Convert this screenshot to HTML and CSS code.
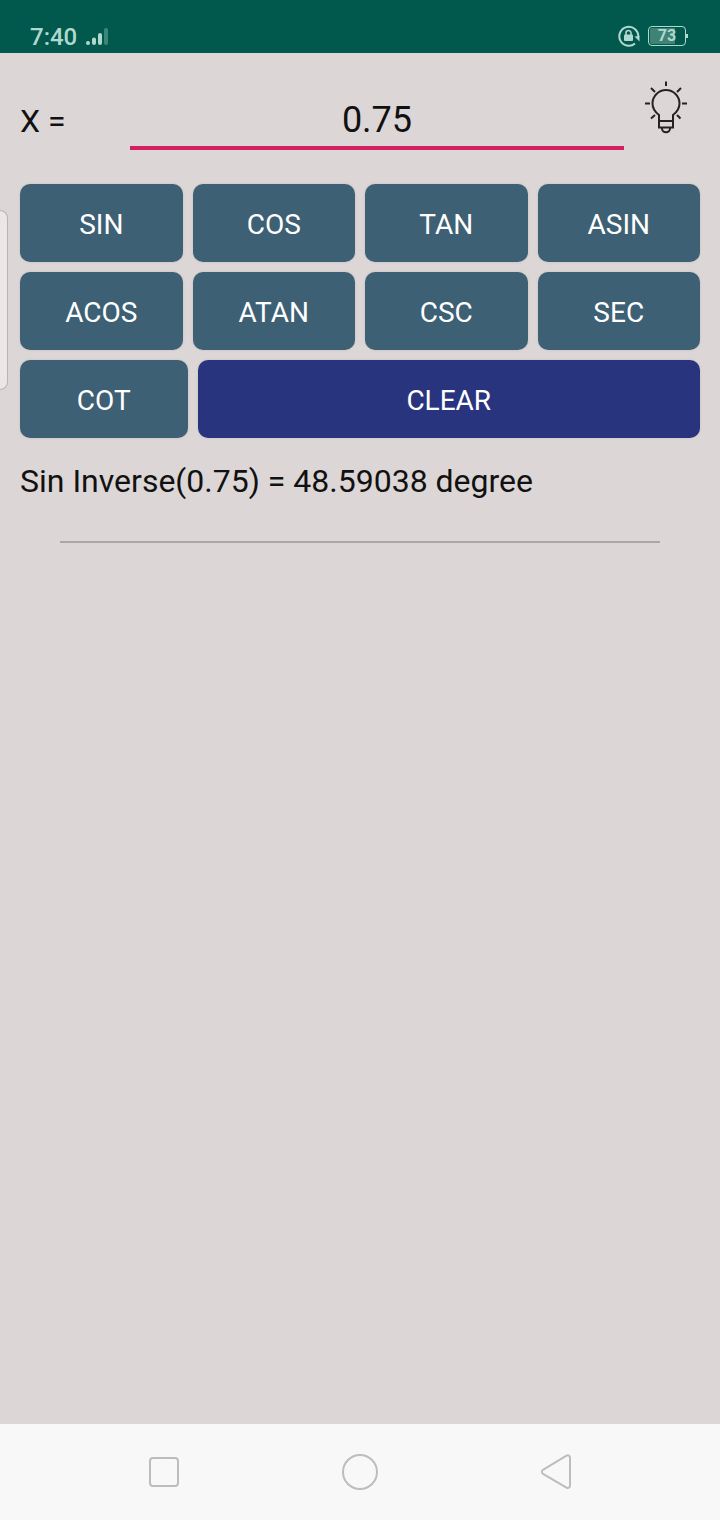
FILE: index.html
```html
<!DOCTYPE html>
<html lang="en">
<head>
    <meta charset="UTF-8">
    <meta name="viewport" content="width=device-width, initial-scale=1.0">
    <title>Trigonometry Calculator</title>
    <link rel="stylesheet" href="styles.css">
</head>
<body>
    <header class="status-bar">
        <div class="status-group">
            <span class="time">7:40</span>
            <svg width="24" height="20" viewBox="0 0 24 20" fill="none" stroke="currentColor" stroke-width="4" stroke-linecap="round">
                <path d="M3 16v0.1M9 12.500v3.500M15 8v8"/>
                <path d="M21 3v13" opacity="0.35"/>
            </svg>
        </div>
        <div class="status-group">
            <svg width="22" height="22" viewBox="0 0 22 22">
                <path d="M17 18.500A9.500 9.500 0 1 1 20.300 12" fill="none" stroke="currentColor" stroke-width="2"/>
                <path d="M16.500 11.500l5-0.500v5.500z" fill="currentColor"/>
                <rect x="6" y="9.500" width="9" height="6.500" rx="1" fill="currentColor"/>
                <path d="M8 10V8a2.500 2.500 0 0 1 5 0v2" fill="none" stroke="currentColor" stroke-width="1.600"/>
            </svg>
            <div class="battery">73</div>
        </div>
    </header>

    <main class="calculator">
        <div class="input-row">
            <label for="x-value">X =</label>
            <input type="text" id="x-value" inputmode="decimal" value="0.75">
            <button type="button" class="hint" aria-label="Hint">
                <svg width="68" height="70" viewBox="0 0 68 70" fill="none" stroke="#262223" stroke-width="2">
                    <path d="M27 42C23 39 20.500 35.500 20.500 30.500a13.500 13.500 0 0 1 27 0C47.500 35.500 45 39 41 42V54.500H27zM27 48H41M30 55.500a4 3.800 0 0 0 8 0"/>
                    <path d="M34 8.500v4.500M13 30.500h5M50 30.500h5M19 15l4 4M49 15l-4 4M19 45.500l4-3.500M48.500 45.500l-3.500-3.500"/>
                </svg>
            </button>
        </div>

        <div class="keys">
            <div class="key-row">
                <button type="button">SIN</button>
                <button type="button">COS</button>
                <button type="button">TAN</button>
                <button type="button">ASIN</button>
            </div>
            <div class="key-row">
                <button type="button">ACOS</button>
                <button type="button">ATAN</button>
                <button type="button">CSC</button>
                <button type="button">SEC</button>
            </div>
            <div class="key-row">
                <button type="button">COT</button>
                <button type="button" class="clear">CLEAR</button>
            </div>
        </div>

        <p class="result">Sin Inverse(0.75) = 48.59038 degree</p>
        <hr>
        <div class="edge-handle"></div>
    </main>

    <nav class="nav-bar">
        <button type="button" aria-label="Recent apps">
            <svg width="40" height="40" viewBox="0 0 40 40"><rect x="6" y="6" width="28" height="28" rx="3"/></svg>
        </button>
        <button type="button" aria-label="Home">
            <svg width="40" height="40" viewBox="0 0 40 40"><circle cx="20" cy="20" r="17"/></svg>
        </button>
        <button type="button" aria-label="Back">
            <svg width="40" height="40" viewBox="0 0 40 40"><path d="M30.500 3.700L7 17.800a2.300 2.300 0 0 0 0 4L30.500 35.700a2.300 2.300 0 0 0 3.500-2V5.700a2.300 2.300 0 0 0-3.500-2z"/></svg>
        </button>
    </nav>
</body>
</html>
```
FILE: styles.css
```css
:root {
    --status-color: #00594c;
    --status-text: #b0d8cf;
    --background-color: #dcd6d6;
    --key-color: #3d6074;
    --clear-color: #29347f;
    --accent-color: #d51e5f;
    --text-color: #111111;
}

* {
    box-sizing: border-box;
    margin: 0;
    padding: 0;
}

body {
    display: flex;
    flex-direction: column;
    min-height: 100vh;
    font-family: Roboto, Arial, sans-serif;
    font-size: 32px;
    line-height: 40px;
    color: var(--text-color);
    background-color: var(--background-color);
}

svg {
    display: block;
}

button,
input {
    font-family: inherit;
    color: inherit;
    border: none;
    background: none;
}

button {
    cursor: pointer;
}

/* Status bar */
.status-bar {
    display: flex;
    justify-content: space-between;
    padding: 21px 32px 0 30px;
    color: var(--status-text);
    background-color: var(--status-color);
}

.status-group {
    display: flex;
    align-items: center;
    gap: 8px;
    height: 32px;
}

.status-group:last-child {
    height: 30px;
}

.time {
    font-size: 24px;
    font-weight: 500;
    line-height: 30px;
}

.battery {
    position: relative;
    width: 38px;
    height: 20px;
    margin-right: 2px;
    padding: 1px;
    border: 1px solid var(--status-text);
    border-radius: 4px;
    font-size: 16px;
    font-weight: 700;
    line-height: 16px;
    text-align: center;
    background: linear-gradient(to right, #3f8377 73%, transparent 73%) content-box;
}

.battery::after {
    content: "";
    position: absolute;
    top: 7px;
    right: -3px;
    width: 2px;
    height: 4px;
    background-color: var(--status-text);
}

/* Calculator */
.calculator {
    position: relative;
    flex: 1;
    padding: 20px;
}

.input-row {
    display: flex;
    align-items: baseline;
}

.input-row label {
    width: 110px;
}

.input-row input {
    flex: 1;
    min-width: 0;
    height: 77px;
    padding: 27px 0 6px;
    border-bottom: 4px solid var(--accent-color);
    font-size: 36px;
    line-height: 40px;
    text-align: center;
    outline: none;
}

.hint {
    align-self: flex-start;
    margin-left: 8px;
}

.keys {
    display: flex;
    flex-direction: column;
    gap: 10px;
    margin-top: 34px;
}

.key-row {
    display: flex;
    gap: 10px;
}

.key-row button {
    flex: 1 1 0;
    min-width: 0;
    height: 78px;
    padding-top: 2px;
    border-radius: 10px;
    font-size: 28px;
    color: #ffffff;
    background-color: var(--key-color);
    box-shadow: 0 0 3px rgba(0, 0, 0, 0.1);
}

.key-row .clear {
    flex-grow: 3;
    background-color: var(--clear-color);
}

.result {
    margin-top: 23px;
}

hr {
    margin: 40px 40px 0;
    border: none;
    border-top: 2px solid #aba7a7;
}

/* Pull-out handle on the left edge of the screen */
.edge-handle {
    position: absolute;
    top: 157px;
    left: 0;
    width: 8px;
    height: 180px;
    border: 1px solid #b9b4b4;
    border-left: none;
    border-radius: 0 8px 8px 0;
    background-color: #ebe7e6;
}

/* Navigation bar */
.nav-bar {
    display: flex;
    justify-content: center;
    gap: 100px;
    background-color: #f8f8f8;
}

.nav-bar button {
    display: flex;
    align-items: center;
    justify-content: center;
    width: 96px;
    height: 96px;
}

.nav-bar svg {
    fill: none;
    stroke: #bdbdbd;
    stroke-width: 2;
}
```
